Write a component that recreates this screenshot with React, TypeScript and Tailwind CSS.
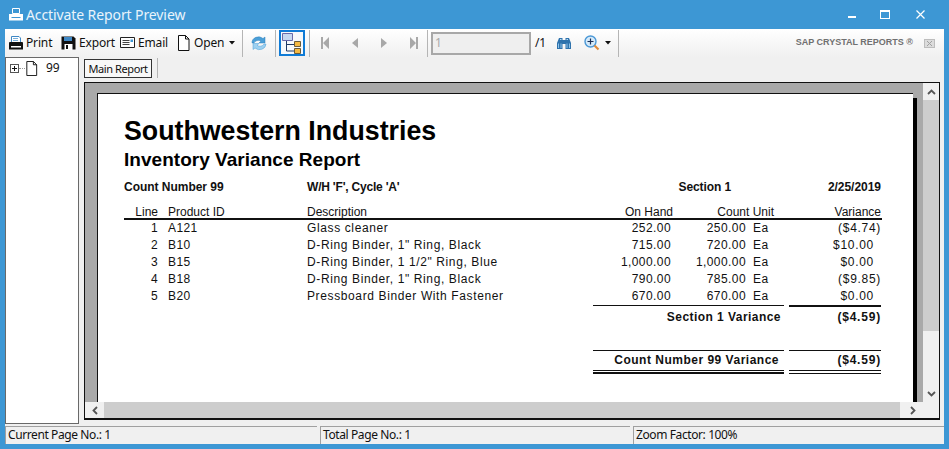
import React from "react";

const ui = "font-[family-name:Noto_Sans,sans-serif]";

function Printer({ white = false }: { white?: boolean }) {
  if (white) {
    return (
      <svg width="16" height="14" viewBox="0 0 16 14" className="shrink-0">
        <path d="M4.500 .5h7v5h-7z" fill="none" stroke="#fff" />
        <path d="M1 6h14v6.500H1z" fill="#fff" />
        <path d="M3.500 9.500h9" stroke="#3d97d4" />
      </svg>
    );
  }
  return (
    <svg width="16" height="15" viewBox="0 0 16 15" className="shrink-0">
      <path d="M3.500 .5h7.500l1.500 1.500v4.500h-9z" fill="#fff" stroke="#3f88c5" />
      <path d="M5 2.500h5M5 4.500h5" stroke="#7ab0da" />
      <path d="M1 7c0-.5.5-1 1-1h12c.5 0 1 .5 1 1v6.500H1z" fill="#111" />
      <path d="M3 10h10v1.500H3z" fill="#fff" />
    </svg>
  );
}

function Sep({ h = "h-[27px]" }: { h?: string }) {
  return <div className={`w-px ${h} bg-[#b5b5b5] shrink-0`} />;
}

function Nav({ d }: { d: string }) {
  return (
    <svg width="10" height="12" viewBox="0 0 10 12" className="shrink-0">
      <path d={d} fill="#a8a8a8" />
    </svg>
  );
}

function Caret() {
  return (
    <svg width="6" height="4" viewBox="0 0 6 4" className="shrink-0">
      <path d="M0 0h6L3 3.500z" fill="#111" />
    </svg>
  );
}

function DocIcon({ w = 13, h = 16 }: { w?: number; h?: number }) {
  return (
    <svg width={w} height={h} viewBox="0 0 13 16" className="shrink-0">
      <path d="M1.500.5h7l3.500 3.500v11.500h-10.500z M8.500.5v3.500h3.500" fill="#fff" stroke="#111" />
    </svg>
  );
}

const rows = [
  ["1", "A121", "Glass cleaner", "252.00", "250.00", "($4.74)"],
  ["2", "B10", 'D-Ring Binder, 1" Ring, Black', "715.00", "720.00", "$10.00"],
  ["3", "B15", 'D-Ring Binder, 1 1/2" Ring, Blue', "1,000.00", "1,000.00", "$0.00"],
  ["4", "B18", 'D-Ring Binder, 1" Ring, Black', "790.00", "785.00", "($9.85)"],
  ["5", "B20", "Pressboard Binder With Fastener", "670.00", "670.00", "$0.00"],
];

const cols = "grid grid-cols-[34px_10px_139px_286px_78px_75px_7px_128px]";

function Variance({ v }: { v: string }) {
  const neg = v.startsWith("(");
  return <div className={`text-right tracking-[0.7px] ${neg ? "pr-0" : "pr-[7px]"}`}>{v}</div>;
}

export default function App() {
  return (
    <div className={`w-[949px] h-[449px] bg-[#3d97d4] flex flex-col overflow-hidden ${ui}`}>
      <div className="h-[29px] flex items-center pl-[8px] shrink-0 text-white">
        <Printer white />
        <span className="ml-[2px] text-[14px] text-[#eaf4fb] tracking-[-0.1px]">Acctivate Report Preview</span>
        <div className="ml-auto flex items-center mr-[24px]">
          <div className="w-[8px] h-[2px] bg-white mt-[4px]" />
          <div className="ml-[24px] w-[10px] h-[9px] border border-white border-t-2" />
          <svg width="9" height="9" viewBox="0 0 9 9" className="ml-[26px]"><path d="M.5.5l8 8M8.500.5l-8 8" stroke="#fff" strokeWidth="1.200" /></svg>
        </div>
      </div>

      <div className="mx-[5px] mb-[5px] flex-1 bg-[#f0f0f0] flex flex-col min-h-0 mr-[5px]">
        <div className="h-[28px] shrink-0 bg-gradient-to-b from-white to-[#f0f0f0] flex items-center text-[12px] text-[#111] relative tracking-[-0.15px]">
          <div className="ml-[3px] w-[47px] flex items-center gap-[2px]"><Printer /><span>Print</span></div>
          <div className="ml-[6px] w-[53px] flex items-center gap-[3px]">
            <svg width="15" height="14" viewBox="0 0 15 14" className="shrink-0">
              <path d="M.5.500h12l2 2v11h-14z" fill="#111" />
              <path d="M3 1h8v4H3z" fill="#3f88c5" />
              <path d="M3.500 8h8v6h-8z" fill="#fff" />
              <path d="M5 9h2v4H5z" fill="#111" />
            </svg>
            <span>Export</span>
          </div>
          <div className="ml-[6px] w-[51px] flex items-center gap-[3px]">
            <svg width="15" height="12" viewBox="0 0 15 12" className="shrink-0">
              <path d="M.5.500h14v10H.5z" fill="#fff" stroke="#222" />
              <path d="M2.500 3.500h7M2.500 5.500h7M2.500 7.500h7" stroke="#444" />
              <path d="M10.500 2.500h2.500v2.500h-2.500z" fill="#3d97d4" />
            </svg>
            <span>Email</span>
          </div>
          <div className="ml-[6px] w-[59px] flex items-center gap-[4px]">
            <DocIcon />
            <span>Open</span>
            <span className="ml-[1px]"><Caret /></span>
          </div>
          <div className="ml-[6px]"><Sep /></div>
          <svg width="16" height="16" viewBox="0 0 16 16" className="ml-[8px] shrink-0">
            <path d="M1 8a6.500 6 0 0 1 11-4.500l2-1.500v6h-6l2-1.800a4.500 4 0 0 0-7 1.800z" fill="#4a9fd8" stroke="#2f7fba" strokeWidth=".5" />
            <path d="M15 9a6.500 6 0 0 1-11 4l-2 1.500v-6h6l-2 1.800a4.500 4 0 0 0 7-1.300z" fill="#9dd0f0" stroke="#4a9fd8" strokeWidth=".5" />
          </svg>
          <div className="ml-[8px]"><Sep /></div>
          <div className="ml-[3px] w-[26px] h-[26px] border-2 border-[#0f7bd6] bg-[#f7f9fb] flex items-center justify-center">
            <svg width="22" height="22" viewBox="0 0 22 22">
              <path d="M5.500 8v11h8M5.500 12.500h8" fill="none" stroke="#1e3a66" />
              <path d="M1.500 1.500h10v7h-10z" fill="#c6d8f0" stroke="#6a6aa8" />
              <path d="M13.500 9.500h6v5h-6z M13.500 16.500h6v5h-6z" fill="#f5b942" stroke="#6a5a3a" />
            </svg>
          </div>
          <div className="ml-[4px]"><Sep /></div>
          <div className="ml-[11px] flex items-center gap-[19px]">
            <Nav d="M0 0h2v12H0zM8 0v12L2 6z" />
            <Nav d="M8 1v10L2 6z" />
            <Nav d="M2 1v10l6-5z" />
            <Nav d="M10 0H8v12h2zM2 0v12l6-6z" />
          </div>
          <div className="ml-[9px]"><Sep /></div>
          <div className="ml-[3px] w-[100px] h-[23px] border-2 border-[#a8a8a8] bg-[#efefef] pl-[2px] text-[#a8a8a8] flex items-center">1</div>
          <span className="ml-[4px] w-[10px]">/1</span>
          <svg width="14" height="13" viewBox="0 0 14 13" className="ml-[12px] shrink-0">
            <path d="M0 12V6l2-5h3.500v2h3V1H12l2 5v6H8.500V7h-3v5z" fill="#2f73ad" />
            <path d="M1.500 11V6.500M4 11V6.500M10 11V6.500M12.500 11V6.500" stroke="#8fc4ea" />
            <path d="M3 2.500h1.500M9.500 2.500H11" stroke="#b9dcf4" />
          </svg>
          <svg width="16" height="16" viewBox="0 0 16 16" className="ml-[13px] shrink-0">
            <circle cx="6.500" cy="6.500" r="5.500" fill="#d5eafa" stroke="#4b98d6" strokeWidth="1.400" />
            <path d="M3.500 6.500h6M6.500 3.500v6" stroke="#1c2f55" strokeWidth="1.200" />
            <path d="M10.500 10.500l4 4" stroke="#e08a3a" strokeWidth="2.200" />
          </svg>
          <span className="ml-[5px]"><Caret /></span>
          <div className="ml-[7px]"><Sep /></div>
          <span className="ml-auto mr-[31px] font-[family-name:Liberation_Sans,sans-serif] font-bold text-[9px] tracking-[0] text-[#707070] whitespace-nowrap">SAP CRYSTAL REPORTS ®</span>
          <div className="absolute right-[9px] top-[10px] w-[11px] h-[9px] border border-[#bdbdbd] bg-[#dcdcdc] flex items-center justify-center">
            <svg width="7" height="7" viewBox="0 0 7 7"><path d="M1 1l5 5M6 1L1 6" stroke="#a0a0a0" /></svg>
          </div>
        </div>

        <div className="flex flex-1 min-h-0">
          <div className="w-[74px] shrink-0 border border-[#696969] bg-white mb-[2px] flex items-start pl-[4px] pt-[1px] text-[12px] text-[#111]">
            <div className="flex items-center h-[18px]">
              <div className="w-[9px] h-[9px] border border-[#555] flex items-center justify-center">
                <svg width="7" height="7" viewBox="0 0 7 7"><path d="M1 3.500h5M3.500 1v5" stroke="#111" /></svg>
              </div>
              <div className="w-[6px] border-t border-dotted border-[#999]" />
              <DocIcon w={13} h={15} />
              <span className="ml-[8px]">99</span>
            </div>
          </div>

          <div className="flex-1 min-w-0 flex flex-col pl-[5px]">
            <div className="h-[25px] shrink-0 flex items-start">
              <div className="mt-[2px] w-[68px] h-[19px] border border-[#333] bg-[#f8f8f8] text-[11px] tracking-[-0.4px] leading-[17px] text-center text-[#111] whitespace-nowrap">Main Report</div>
              <div className="ml-[5px] mt-[1px]"><Sep h="h-[20px]" /></div>
            </div>
            <div className="h-[338px] mr-[4px] border border-[#111] border-b-2 flex flex-col min-h-0 bg-[#f0f0f0]">
              <div className="flex flex-1 min-h-0">
                <div className="flex-1 min-w-0 bg-[#a9a9a9] pl-[12px] pt-[10px] overflow-hidden flex items-start">
                  <div className="flex shrink-0">
                    <div className="w-[816px] h-[400px] bg-white border-t border-l border-[#111] pl-[26px] pr-[31px] pt-[22px] text-[#111] font-[family-name:Liberation_Sans,sans-serif] text-[12px] tracking-[0.42px]">
                      <div className="text-[26.750px] leading-[30px] font-bold tracking-[0] text-black whitespace-nowrap">Southwestern Industries</div>
                      <div className="text-[19px] leading-[24px] mt-[2px] font-bold tracking-[0.03px] text-black whitespace-nowrap">Inventory Variance Report</div>
                      <div className={`${cols} font-bold mt-[7px] h-[17px] leading-[17px] tracking-[-0.03px]`}>
                        <div className="col-span-4 flex"><span className="w-[183px]">Count Number 99</span><span className="tracking-[-0.2px]">W/H 'F', Cycle 'A'</span></div>
                        <div className="col-span-2 text-right pr-[15px] tracking-[-0.1px]">Section 1</div>
                        <div className="col-span-2 text-right">2/25/2019</div>
                      </div>
                      <div className={`${cols} mt-[8px] h-[14px] leading-[17px] border-b-2 border-[#111] box-content tracking-[0]`}>
                        <div className="text-right">Line</div>
                        <div />
                        <div>Product ID</div>
                        <div>Description</div>
                        <div className="text-right -mr-[2px]">On Hand</div>
                        <div className="col-span-3 flex"><span className="w-[103px] text-right">Count Unit</span><span className="flex-1 text-right">Variance</span></div>
                      </div>
                      {rows.map((r) => (
                        <div key={r[0]} className={`${cols} h-[17px] leading-[17px] whitespace-nowrap`}>
                          <div className="text-right">{r[0]}</div>
                          <div />
                          <div>{r[1]}</div>
                          <div className="tracking-[0.62px]">{r[2]}</div>
                          <div className="text-right">{r[3]}</div>
                          <div className="text-right">{r[4]}</div>
                          <div />
                          <div className="flex justify-between"><span>Ea</span><Variance v={r[5]} /></div>
                        </div>
                      ))}
                      <div className="flex justify-end font-bold mr-[1px]">
                        <div className="w-[191px] h-[21px] border-t border-[#111] pr-[3px] pt-[3px] leading-[17px] text-right whitespace-nowrap tracking-[0.45px]">Section 1 Variance</div>
                        <div className="ml-[5px] w-[92px] h-[21px] border-t-2 border-[#111] pt-[2px] leading-[16px] text-right tracking-[0.8px]">($4.59)</div>
                      </div>
                      <div className="flex justify-end mt-[24px] font-bold mr-[1px]">
                        <div className="w-[191px] h-[24px] border-t border-b-2 border-[#111] text-right tracking-[0.5px] whitespace-nowrap">
                          <div className="h-[20px] border-b border-[#111] pr-[5px] pt-[1px] leading-[17px]">Count Number 99 Variance</div>
                        </div>
                        <div className="ml-[5px] w-[92px] h-[24px] border-t border-b-4 border-double border-[#111] pt-[1px] text-right leading-[17px] tracking-[0.8px]">($4.59)</div>
                      </div>
                    </div>
                    <div className="w-[4px] mt-[5px] bg-black" />
                  </div>
                </div>
                <div className="w-[16px] shrink-0 bg-[#f0f0f0] flex flex-col items-center">
                  <div className="h-[17px] flex items-center"><svg width="9" height="6" viewBox="0 0 9 6"><path d="M1 5l3.500-3.500L8 5" fill="none" stroke="#555" strokeWidth="1.800" /></svg></div>
                  <div className="w-full h-[231px] bg-[#cdcdcd]" />
                  <div className="mt-auto h-[17px] flex items-center"><svg width="9" height="6" viewBox="0 0 9 6"><path d="M1 1l3.500 3.500L8 1" fill="none" stroke="#555" strokeWidth="1.800" /></svg></div>
                </div>
              </div>
              <div className="h-[16px] shrink-0 bg-[#f0f0f0] flex items-center">
                <div className="w-[19px] flex justify-center"><svg width="6" height="9" viewBox="0 0 6 9"><path d="M5 1L1.500 4.500 5 8" fill="none" stroke="#555" strokeWidth="1.800" /></svg></div>
                <div className="w-[796px] h-full bg-[#cdcdcd]" />
                <div className="w-[25px] flex justify-center"><svg width="6" height="9" viewBox="0 0 6 9"><path d="M1 1l3.500 3.500L1 8" fill="none" stroke="#555" strokeWidth="1.800" /></svg></div>
              </div>
            </div>
          </div>
        </div>

        <div className="h-[18px] shrink-0 flex gap-[3px] text-[12px] text-[#111] leading-[16px] tracking-[-0.4px]">
          <div className="w-[312px] border-t border-l border-[#a0a0a0] pl-[2px] whitespace-nowrap">Current Page No.: 1</div>
          <div className="w-[310px] border-t border-l border-[#a0a0a0] pl-[2px] whitespace-nowrap">Total Page No.: 1</div>
          <div className="flex-1 border-t border-l border-[#a0a0a0] pl-[2px] whitespace-nowrap">Zoom Factor: 100%</div>
        </div>
      </div>
    </div>
  );
}
